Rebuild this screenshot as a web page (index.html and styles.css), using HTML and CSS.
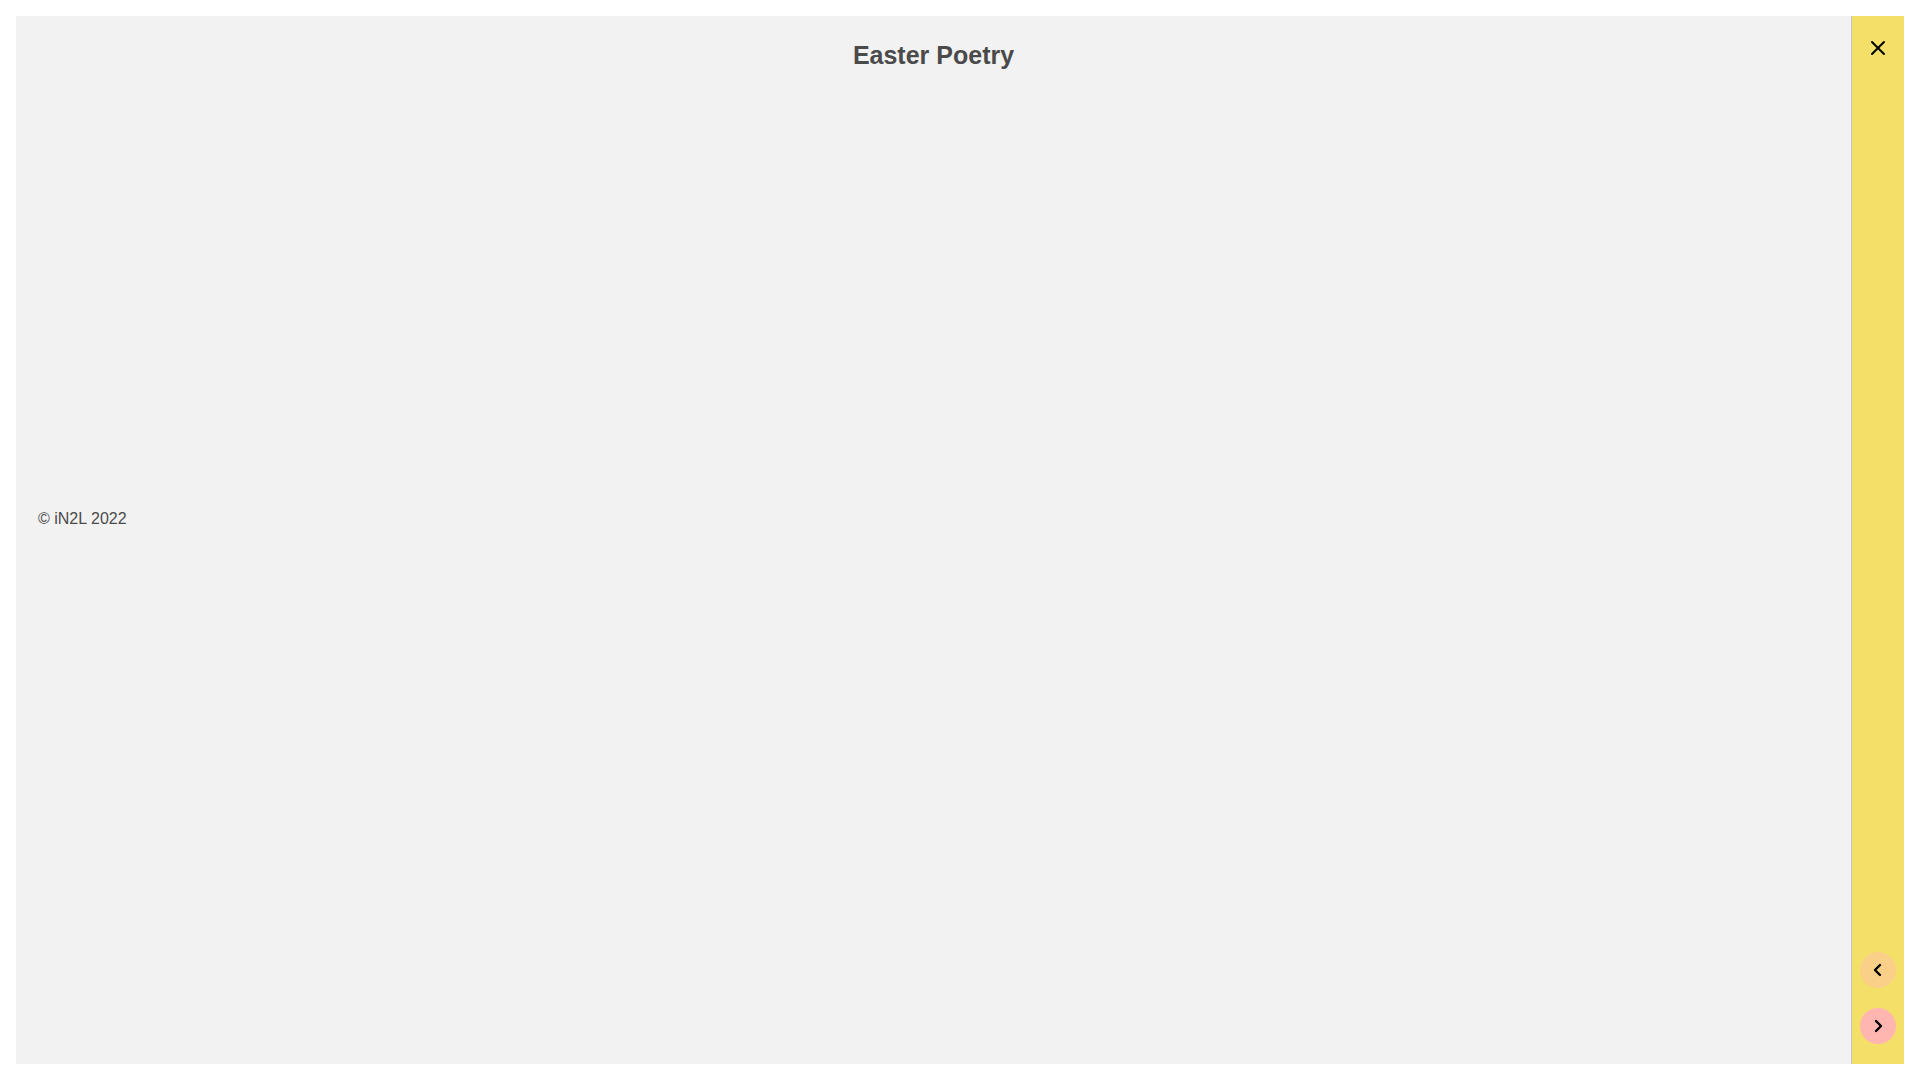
FILE: index.html
```html
<!DOCTYPE html>
<html lang="en">
<head>
    <meta charset="UTF-8">
    <meta name="viewport" content="width=device-width, initial-scale=1.0">
    <title>Easter Poetry</title>
    <link rel="stylesheet" href="styles.css">
</head>
<body>
    <div class="reader">
        <main class="page">
            <h1>Easter Poetry</h1>
            <div class="poem"></div>
            <p class="copyright">© iN2L 2022</p>
        </main>

        <nav class="toolbar">
            <button type="button" class="close" aria-label="Close">
                <svg viewBox="0 0 36 36"><path d="M12 12 L24 24 M24 12 L12 24"/></svg>
            </button>

            <div class="pager">
                <button type="button" class="round" aria-label="Previous page" disabled>
                    <svg viewBox="0 0 36 36"><path d="M20 13 L15 18 L20 23"/></svg>
                </button>
                <button type="button" class="round" aria-label="Next page">
                    <svg viewBox="0 0 36 36"><path d="M16 13 L21 18 L16 23"/></svg>
                </button>
            </div>
        </nav>
    </div>
</body>
</html>
```

FILE: styles.css
```css
* {
    box-sizing: border-box;
}

body {
    margin: 0;
    padding: 16px;
    background: #fff;
    color: #4a4a4a;
    font-family: "Liberation Sans", Arial, Helvetica, sans-serif;
    font-size: 16px;
}

.reader {
    display: flex;
    min-height: calc(100vh - 32px);
}

.page {
    flex: 1;
    padding: 24px 22px;
    background: #f2f2f2;
}

h1 {
    margin: 0 0 8px;
    font-size: 25px;
    line-height: 30px;
    text-align: center;
}

.poem {
    min-height: 40vh;
}

.copyright {
    margin: 0;
    line-height: 18px;
}

/* right hand bar */
.toolbar {
    display: flex;
    flex-direction: column;
    justify-content: space-between;
    padding: 14px 8px 20px;
    border-left: 1px solid #c4c4c8;
    background: #f4e068;
}

.pager {
    display: flex;
    flex-direction: column;
    gap: 20px;
}

button {
    display: block;
    width: 36px;
    height: 36px;
    padding: 0;
    border: none;
    background: none;
    cursor: pointer;
}

button svg {
    display: block;
    width: 36px;
    height: 36px;
    fill: none;
    stroke: #000;
    stroke-width: 2;
    stroke-linecap: round;
    stroke-linejoin: round;
}

.round {
    border-radius: 50%;
    background: #ffb5b0;
}

.round svg {
    stroke-width: 2.4;
}

.round:disabled {
    background: #facf88;
    cursor: default;
}
```
